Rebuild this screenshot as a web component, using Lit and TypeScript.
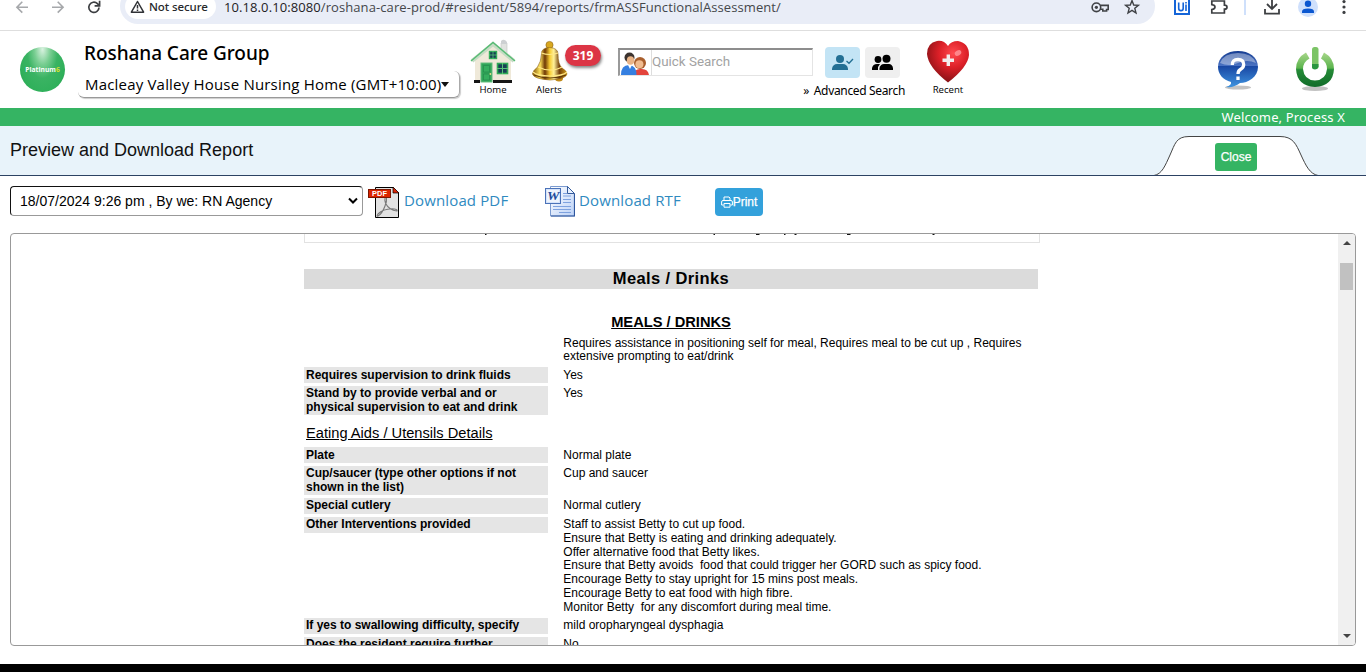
import { LitElement, html, css, svg, nothing } from "lit";
import { customElement } from "lit/decorators.js";

interface Row {
  label?: string[];
  value: string[];
  size: string;
}

const intro = [
  "Requires assistance in positioning self for meal, Requires meal to be cut up , Requires",
  "extensive prompting to eat/drink",
];

const firstRows: Row[] = [
  { label: ["Requires supervision to drink fluids"], value: ["Yes"], size: "one" },
  { label: ["Stand by to provide verbal and or", "physical supervision to eat and drink"], value: ["Yes"], size: "two" },
];

const utensilRows: Row[] = [
  { label: ["Plate"], value: ["Normal plate"], size: "one" },
  { label: ["Cup/saucer (type other options if not", "shown in the list)"], value: ["Cup and saucer"], size: "two" },
  { label: ["Special cutlery"], value: ["Normal cutlery"], size: "one" },
  {
    label: ["Other Interventions provided"],
    value: [
      "Staff to assist Betty to cut up food.",
      "Ensure that Betty is eating and drinking adequately.",
      "Offer alternative food that Betty likes.",
      "Ensure that Betty avoids  food that could trigger her GORD such as spicy food.",
      "Encourage Betty to stay upright for 15 mins post meals.",
      "Encourage Betty to eat food with high fibre.",
      "Monitor Betty  for any discomfort during meal time.",
    ],
    size: "seven",
  },
  { label: ["If yes to swallowing difficulty, specify"], value: ["mild oropharyngeal dysphagia"], size: "one" },
  { label: ["Does the resident require further"], value: ["No"], size: "two" },
];

@customElement("browser-bar")
export class BrowserBar extends LitElement {
  static styles = css`
    :host { display: flex; height: 30px; background: #fff; border-bottom: 1px solid #dedede; overflow: hidden; font-family: "Open Sans", sans-serif; }
    svg { display: block; flex: none; }
    .nav { width: 120px; flex: none; }
    .omni { width: 1035px; height: 36px; margin-top: -12px; background: #e9edf7; border-radius: 18px; display: flex; flex: none; align-items: center; }
    .chip { margin-left: 5px; width: 91px; height: 25px; border-radius: 13px; background: #fff; display: flex; align-items: center; flex: none; }
    .chip svg { margin: 2px 0 0 5px; }
    .chip span { font-size: 11.5px; line-height: 12px; padding-top: 2px; font-weight: 500; color: #26282b; margin: 0 0 0 4px; letter-spacing: -0.08px; white-space: nowrap; font-family: "Noto Sans", sans-serif; }
    .url { margin-left: 8px; width: 866px; font-size: 13px; line-height: 14px; padding-top: 2px; color: #44474b; letter-spacing: 0.09px; white-space: nowrap; }
    .url b { font-weight: 400; color: #1f2124; }
    .tools { width: 211px; }
  `;

  render() {
    return html`
      <svg class="nav" width="120" height="30" viewBox="0 0 120 30" fill="none" stroke-width="1.6">
        <path d="M28 7.2H17M22.3 1.8L16.9 7.2L22.3 12.6" stroke="#a6a8ab" />
        <path d="M52 7.2H63M57.7 1.8L63.1 7.2L57.7 12.6" stroke="#a6a8ab" />
        <path d="M99 7.4A5.1 5.1 0 1 1 97.4 3.6L99 5.2" stroke="#3d3f42" stroke-width="1.7" />
        <path d="M99.6 0.8V5.8H94.6" stroke="#3d3f42" stroke-width="1.7" />
      </svg>
      <div class="omni">
        <div class="chip">
          <svg width="15" height="14" viewBox="0 0 15 14" fill="none" stroke="#303236" stroke-width="1.5">
            <path d="M7.5 1.5L13.6 12.2H1.4Z" stroke-linejoin="round" /><path d="M7.5 5V8.4M7.5 9.4V11" />
          </svg>
          <span>Not secure</span>
        </div>
        <span class="url"><b>10.18.0.10:8080</b>/roshana-care-prod/#resident/5894/reports/frmASSFunctionalAssessment/</span>
        <svg width="56" height="36" viewBox="0 0 56 36" fill="none" stroke="#3f4145" stroke-width="1.6">
          <circle cx="6.4" cy="19.3" r="4.3" /><circle cx="6.4" cy="19.3" r="1.6" fill="#3f4145" stroke="none" />
          <path d="M10.3 17.4H18.2V21.5H16.6V23H12.8V21.2H10.2" />
          <path d="M42 12.6L43.7 17L48.4 17.3L44.8 20.3L46 25L42 22.4L38 25L39.2 20.3L35.6 17.3L40.3 17Z" stroke-width="1.4" />
        </svg>
      </div>
      <svg class="tools" width="211" height="30" viewBox="0 0 211 30">
        <rect x="20" y="-4" width="14" height="18" fill="#fff" stroke="#1565d8" stroke-width="2" />
        <path d="M23.7 2.6V8.2Q23.7 10.6 26 10.6Q28.2 10.6 28.2 8.2V2.6M31 4.5V11M31 2V3.4" fill="none" stroke="#1565d8" stroke-width="1.6" />
        <path d="M56.8 1H69.400V5.200Q72 5.200 72 7.200Q72 9.200 69.400 9.200V13H56.8V9.5Q60 9 60 7Q60 5 56.8 4.6Z" fill="none" stroke="#3d3f42" stroke-width="1.7" />
        <path d="M90 0V15" stroke="#cfe0fb" stroke-width="2" />
        <path d="M117 -3V8M112 4L117 9L122 4M110 9V13.7H124V9" fill="none" stroke="#3d3f42" stroke-width="1.8" />
        <circle cx="153" cy="7" r="10" fill="#cfe0fc" />
        <circle cx="153" cy="3.8" r="3.2" fill="#0b57d0" /><path d="M147 13V11.5Q147 8.4 153 8.4Q159 8.4 159 11.5V13Z" fill="#0b57d0" />
        <circle cx="189" cy="1.6" r="1.6" fill="#3d3f42" /><circle cx="189" cy="7" r="1.6" fill="#3d3f42" /><circle cx="189" cy="12.4" r="1.6" fill="#3d3f42" />
      </svg>
    `;
  }
}

@customElement("site-header")
export class SiteHeader extends LitElement {
  static styles = css`
    :host { display: flex; height: 77px; background: #fff; font-family: "Open Sans", sans-serif; color: #000; }
    svg { display: block; flex: none; overflow: visible; }
    .logo { margin: 16px 0 0 20px; width: 45px; height: 45px; display: grid; place-items: center; border-radius: 50%; background: radial-gradient(ellipse at 50% 5%, #d9f2e0 0, #79ce92 25%, #3ab363 48%, #2fb05a 75%, #1e9448 100%); flex: none; }
    .logo span { font: 700 6.7px "Open Sans", sans-serif; color: #fff; }
    .logo i { font-style: normal; color: #d5df2c; }
    .facility { margin-left: 13px; width: 383px; flex: none; }
    .name { margin: 9px 0 0 6px; font: 500 19px/26px "Noto Sans", sans-serif; white-space: nowrap; letter-spacing: -0.06px; }
    .picker { margin-top: 5px; width: 374px; height: 26px; padding-left: 7px; display: flex; align-items: center; border-radius: 6px; border-right: 1px solid #aaa; border-bottom: 1px solid #999; box-shadow: 1px 1px 1px #ccc; font-size: 15px; letter-spacing: 0.19px; white-space: nowrap; }
    .caret { border: 4px solid transparent; border-top: 5px solid #111; border-bottom: 0; }
    .item { display: flex; flex-direction: column; align-items: center; flex: none; }
    .item span { font-size: 9.6px; line-height: 14px; margin-top: -2px; white-space: nowrap; }
    .home { width: 50px; margin: 8px 0 0 7px; }
    .alerts { width: 50px; margin: 8px 0 0 6px; position: relative; }
    .alerts .badge { position: absolute; left: 41px; top: 6px; width: 36px; height: 21px; border-radius: 11px; background: #dc3545; color: #fff; font: 700 12px/21px "Noto Sans", sans-serif; text-align: center; box-shadow: 1px 2px 3px #888; }
    .search { margin: 17px 0 0 44px; width: 287px; flex: none; }
    .line { display: flex; }
    .box { width: 192px; height: 25px; border: 1px solid #e4e4e4; border-top: 2px solid #8d8d8d; border-left: 2px solid #999; display: flex; }
    .box span { border-left: 1px solid #ddd; font: 13.4px/23px Roboto, sans-serif; color: #a2a2a2; }
    .sq { width: 35px; height: 31px; border-radius: 4px; display: grid; place-items: center; margin: -1px 0 0 12px; background: #c3e4f5; }
    .sq.grey { background: #efefef; margin-left: 5px; }
    .adv { font-size: 12px; line-height: 17px; margin-top: 4px; text-align: right; font-family: "Noto Sans", sans-serif; letter-spacing: -0.34px; white-space: nowrap; }
    .adv b { font-weight: 400; margin-right: 2px; }
    .recent { width: 50px; margin: 9px 0 0 18px; }
    .help { margin: 18px 0 0 244px; }
    .power { margin: 15px 0 0 36px; }
  `;

  render() {
    return html`
      <div class="logo"><span>Platinum<i>6</i></span></div>
      <div class="facility">
        <div class="name">Roshana Care Group</div>
        <div class="picker">Macleay Valley House Nursing Home (GMT+10:00)<span class="caret"></span></div>
      </div>
      <div class="item home">
        <svg width="46" height="46" viewBox="0 0 46 46">
          <path d="M31 4H37V17L31 11Z" fill="#e1e3e0" stroke="#c0c5c0" stroke-width="0.6" /><path d="M31 2Q34 -1 37 3L37 5H31Z" fill="#cdd0d2" />
          <path d="M5 19L23 5L41 20V43H5Z" fill="#efe9d9" />
          <path d="M2 22L23 5L44 22" fill="none" stroke="#c5dcc4" stroke-width="4" />
          <path d="M1 22L23 3.5L45 22" fill="none" stroke="#57bb74" stroke-width="1.4" />
          <path d="M4 41H10V44H4ZM23 41H42V44H23Z" fill="#161616" />
          <rect x="11" y="24" width="11" height="19" fill="#2fa558" stroke="#67bd7f" stroke-width="1" />
          <path d="M13.5 26.5H19.5V33H13.5ZM13.5 35H19.5V41H13.5Z" fill="#35ad5e" stroke="#24854a" stroke-width="0.6" /><circle cx="20.4" cy="35" r="0.9" fill="#e8dc8c" />
          <rect x="27.5" y="24.5" width="10" height="10" fill="#173f54" stroke="#2faa56" stroke-width="1.6" /><path d="M32.5 24V35M27 29.5H38" stroke="#57c277" />
          <rect x="19.5" y="12.5" width="7" height="7" fill="#173f54" stroke="#2faa56" stroke-width="1.4" /><path d="M23 12V20M19 16H27" stroke="#57c277" stroke-width="0.8" />
        </svg>
        <span>Home</span>
      </div>
      <div class="item alerts">
        <svg width="40" height="46" viewBox="0 0 40 46">
          <defs><linearGradient id="gold"><stop offset="0" stop-color="#805208" /><stop offset=".22" stop-color="#ffe45c" /><stop offset=".36" stop-color="#6e3806" /><stop offset=".5" stop-color="#f7cc32" /><stop offset=".62" stop-color="#fff199" /><stop offset=".78" stop-color="#744009" /><stop offset="1" stop-color="#d69d16" /></linearGradient></defs>
          <ellipse cx="30" cy="39.5" rx="4" ry="3" fill="#c18a17" />
          <circle cx="20.5" cy="6" r="3.6" fill="#d9a820" stroke="#8b6112" stroke-width="0.6" />
          <path d="M12.5 15Q12 9 20.5 8.5Q29 9 29 15Q29 25 33 29Q38 32 38 35Q37 40 21 41Q5 40 3.5 35Q3.5 32 8.5 28Q12 23 12.5 15Z" fill="url(#gold)" stroke="#8b6112" stroke-width="0.6" />
          <path d="M4 33Q8 37 21 37Q34 37 38 33M9 28Q15 31 21 31Q28 31 33 28M12.5 14Q20 17 29 14" fill="none" stroke="#ffe784" stroke-width="1.2" />
          <path d="M5 36Q12 39 21 39Q31 39 37 36" fill="none" stroke="#5d3709" stroke-width="1" />
        </svg>
        <span>Alerts</span><div class="badge">319</div>
      </div>
      <div class="search">
        <div class="line">
          <div class="box">
            <svg width="31" height="25" viewBox="0 0 31 25">
              <circle cx="20" cy="13" r="6" fill="#a95f2d" /><circle cx="19.400" cy="14.200" r="4" fill="#f0bc90" />
              <path d="M14 25Q14 19 20 19Q28 18 29 25Z" fill="#e3443c" />
              <circle cx="9.500" cy="7.500" r="5" fill="#3b332f" /><ellipse cx="10.500" cy="10.500" rx="3.700" ry="4.300" fill="#eab588" />
              <path d="M1 25Q1 15 9 15Q17 16 16.5 25Z" fill="#357fe0" /><path d="M8 15L10 19L12 15Z" fill="#fff" />
            </svg><span>Quick Search</span>
          </div>
          <div class="sq"><svg width="23" height="17" viewBox="0 0 23 17"><circle cx="9" cy="5" r="4" fill="#226f94" /><path d="M1 16V14.5Q2 10 6 10H12Q16 10 17 14.5V16Z" fill="#226f94" /><path d="M15.5 7L18 9.3L22 5" fill="none" stroke="#226f94" stroke-width="1.3" /></svg></div>
          <div class="sq grey"><svg width="23" height="17" viewBox="0 0 23 17"><circle cx="7" cy="5.5" r="3.4" /><path d="M1 16V14Q2 10 6 10H9L7 13V16Z" /><circle cx="15.5" cy="4.7" r="4" /><path d="M8.5 16V14Q9.5 10 13 10H18Q21 10 22 14V16Z" /></svg></div>
        </div>
        <div class="adv"><b>»</b> Advanced Search</div>
      </div>
      <div class="item recent">
        <svg width="44" height="45" viewBox="0 0 44 45">
          <defs><radialGradient id="heart" cx=".62" cy=".3" r=".75"><stop offset="0" stop-color="#ff4a50" /><stop offset=".45" stop-color="#dd2028" /><stop offset="1" stop-color="#7c1014" /></radialGradient></defs>
          <path d="M22 6Q25 1 32 1Q43 3 43 15Q42 27 22 42.5Q2 27 1 14Q1 3 11 1Q18 0 22 6Z" fill="url(#heart)" />
          <ellipse cx="32" cy="13" rx="3.5" ry="2.5" fill="#ff999c" opacity=".8" transform="rotate(-30 32 13)" />
          <path d="M22.3 14.5V26M16.5 20.2H28" stroke="#f3eded" stroke-width="3.4" />
        </svg>
        <span>Recent</span>
      </div>
      <svg class="help" width="42" height="42" viewBox="0 0 42 42">
        <defs><linearGradient id="blue" x2="0" y2="1"><stop offset="0" stop-color="#153c91" /><stop offset=".4" stop-color="#4a72c2" /><stop offset=".42" stop-color="#1947a3" /><stop offset="1" stop-color="#3e93df" /></linearGradient></defs>
        <ellipse cx="21" cy="38.5" rx="13" ry="2" fill="#aaa" opacity=".7" />
        <path d="M21 2C32 2 41 8 41 18C41 28 31 34 23 34Q17 39 9 38Q15 36 14 33C6 31 1 25 1 18C1 8 10 2 21 2Z" fill="url(#blue)" />
        <path d="M3 14Q7 4 21 4Q35 4 39 14Q30 10 21 14Q12 18 3 14Z" fill="#fff" opacity=".38" />
        <path d="M15.3 16Q15 10.5 21 10.5Q26.7 10.5 26.7 15.5Q26.7 18.5 24 20Q21 21.5 21 25M21 27.4V31" fill="none" stroke="#fff" stroke-width="3.3" />
      </svg>
      <svg class="power" width="40" height="46" viewBox="0 0 40 46">
        <defs><linearGradient id="pow" x2="0" y2="1"><stop offset="0" stop-color="#a8d68a" /><stop offset=".45" stop-color="#5bb44d" /><stop offset=".5" stop-color="#258b37" /><stop offset="1" stop-color="#116c2a" /></linearGradient></defs>
        <ellipse cx="20" cy="42.5" rx="13" ry="2.5" fill="#999" opacity=".6" />
        <path d="M11 6.5L14.5 12.5Q8 16 8 23Q9 34 20 34.5Q31 34 32 23Q32 16 26 12.5L29 6.5Q39 12 39 23Q38 40 20 41Q2 40 1 23Q1 12 11 6.5Z" fill="url(#pow)" />
        <rect x="17" y="1" width="6.5" height="22" rx="2.5" fill="#7cc466" /><path d="M17 18H23.5V21Q22 23.5 20 23.5Q17 23 17 21Z" fill="#2a9640" />
      </svg>
    `;
  }
}

@customElement("report-page")
export class ReportPage extends LitElement {
  static styles = css`
    :host { flex: 1; display: block; height: 411px; overflow: hidden; font: 12px/13.75px "Liberation Sans", Arial, sans-serif; color: #000; }
    .sheet { width: 736px; margin-left: 293px; }
    .prior { height: 8px; border: 1px solid #e2e2e2; border-top: 0; }
    .prior svg { display: block; }
    .band { margin-top: 26px; width: 734px; height: 20px; background: #dbdbdb; font: 700 16.5px/18px "Liberation Sans", sans-serif; text-align: center; letter-spacing: 0.38px; }
    .sub { width: 734px; margin-top: 23px; font: 700 14.67px/20px "Liberation Sans", sans-serif; text-align: center; text-decoration: underline; }
    .intro { margin: 4.6px 0 3.8px 259.3px; height: 27px; }
    .ln { white-space: pre; }
    .row { display: grid; grid-template-columns: 244px 1fr; column-gap: 15.3px; margin-bottom: 3px; align-items: start; }
    .one { height: 15.6px; } .two { height: 29px; } .seven { height: 98.4px; }
    .label { background: #e5e5e5; font-weight: 700; padding: 1.45px 2px 0; height: 16px; box-sizing: border-box; }
    .two .label { height: 29px; }
    .value { padding-top: 1.45px; }
    .group { font-size: 14.67px; line-height: 20px; text-decoration: underline; margin: 8px 0 4.4px 2px; }
  `;

  row(r: Row) {
    return html`<div class="row ${r.size}">
      <div class="label">${r.label?.map((t) => html`<div class="ln">${t}</div>`) ?? nothing}</div>
      <div class="value">${r.value.map((t) => html`<div class="ln">${t}</div>`)}</div>
    </div>`;
  }

  render() {
    return html`<div class="sheet">
      <div class="prior"><svg width="734" height="8" viewBox="0 0 734 8"><path d="M180 0.500H181.500M408.500 0.500H410M451 0.500H454.500M479 0.500H480.500M489.500 0.500H491.500M542 0.500H545.500M627.500 0.500H629.500" stroke="#111" /></svg></div>
      <div class="band">Meals / Drinks</div>
      <div class="sub">MEALS / DRINKS</div>
      <div class="intro">${intro.map((t) => html`<div class="ln">${t}</div>`)}</div>
      ${firstRows.map((r) => this.row(r))}
      <div class="group">Eating Aids / Utensils Details</div>
      ${utensilRows.map((r) => this.row(r))}
    </div>`;
  }
}

@customElement("app-root")
export class AppRoot extends LitElement {
  static styles = css`
    :host { display: flex; flex-direction: column; height: 672px; background: #fff; overflow: hidden; font-family: "Liberation Sans", Arial, sans-serif; }
    svg { display: block; flex: none; }
    .browser, .header { flex: none; }
    .welcome { height: 18px; background: #35b463; color: #fff; text-align: right; padding-right: 21px; font: 13px/18px "Noto Sans", sans-serif; letter-spacing: 0.15px; flex: none; }
    .titlebar { height: 49px; background: #e8f3fa; border-bottom: 1px solid #2c4263; display: flex; justify-content: space-between; flex: none; }
    .titlebar h1 { margin: 0 0 0 10px; font: 400 18px/48px "Liberation Sans", sans-serif; color: #111; }
    .tab { width: 166px; height: 40px; margin: 10px 47px -1px 0; display: grid; }
    .tab svg, .tab button { grid-area: 1 / 1; }
    .tab button { width: 42px; height: 28px; margin: 7px 0 0 62px; padding: 0; border: 0; border-radius: 3px; background: #35b463; color: #fff; font: 500 12px "Liberation Sans", sans-serif; -webkit-text-stroke: 0.25px #fff; }
    .toolbar { height: 57px; display: flex; align-items: flex-start; flex: none; }
    .select { width: 342px; height: 28px; margin: 10px 0 0 10px; padding-left: 9px; border: 1px solid #111; border-right-color: #999; border-bottom-color: #999; border-radius: 4px; display: flex; align-items: center; justify-content: space-between; font-size: 14px; }
    .select svg { margin-right: 3px; }
    .pdf { margin: 10px 0 0 5px; }
    .word { margin: 10px 0 0 36px; }
    .link { margin: 12px 0 0 5px; font: 15px/24px "Open Sans", sans-serif; letter-spacing: 0.14px; color: #2f8abf; white-space: nowrap; width: 105px; }
    .link.rtf { margin-left: 4px; width: 101px; }
    .print { margin: 12px 0 0 35px; width: 48px; height: 28px; border: 0; padding: 0; border-radius: 4px; background: #33a1db; color: #fff; font: 12px "Liberation Sans", sans-serif; display: flex; align-items: center; justify-content: center; -webkit-text-stroke: 0.25px #fff; }
    .frame { height: 411px; margin: 0 10px 0 10px; border: 1px solid #999; border-radius: 4px; display: flex; overflow: hidden; flex: none; }
    .scroll { width: 17px; background: #f0f0f0; display: flex; flex-direction: column; align-items: center; flex: none; }
    .up { border: 4px solid transparent; border-bottom-color: #444; border-top: 0; margin-top: 7px; }
    .thumb { width: 13px; height: 27px; background: #c1c1c1; margin-top: 18px; }
    .down { border: 4px solid transparent; border-top-color: #444; border-bottom: 0; margin: auto 0 7px; }
    .taskbar { height: 8px; background: #000; margin-top: auto; flex: none; }
  `;

  pdfIcon = svg`<svg class="pdf" width="31" height="32" viewBox="0 0 31 32">
    <path d="M7.5 1.5H25L30.5 7V31.5H7.5Z" fill="#e2e2e2" stroke="#000" />
    <path d="M25 1L31 7H25Z" fill="#d92405" stroke="#000" stroke-width="0.7" />
    <path d="M17.5 11Q16 14 18 18Q21 24 29 25Q30 23 24 22.8Q15 23 10 28Q8 31 10 30Q14 28 17 20Q19 15 18.5 12" fill="none" stroke="#787878" stroke-width="1.1" />
    <rect x="0.5" y="3.5" width="22" height="8" fill="#dc2300" stroke="#7c1600" />
    <text x="4" y="10.2" font-family="Liberation Sans" font-weight="700" font-size="7.4" fill="#fff" textLength="15">PDF</text>
  </svg>`;

  wordIcon = svg`<svg class="word" width="30" height="31" viewBox="0 0 30 31">
    <defs><linearGradient id="paper" x2="1" y2="1"><stop offset="0" stop-color="#fff" /><stop offset="1" stop-color="#bcd2f7" /></linearGradient></defs>
    <path d="M5.5 .5H22.5L29.5 7.5V30H5.5Z" fill="url(#paper)" stroke="#7b9bd0" />
    <path d="M22.5 .5V7.5H29.5Z" fill="#e8f1ff" stroke="#345b9b" />
    <path d="M29.5 8V30H6" fill="none" stroke="#2e569e" stroke-width="1.2" />
    <path d="M18 7.5H22M18 10H26M18 13.5H26M18 16.5H26M8 20.5H26M8 23.5H26M14 26.5H26" stroke="#7ea2df" />
    <rect x=".5" y="2.5" width="15" height="15" fill="#d4e3fb" stroke="#4b72b8" /><rect x="2" y="4" width="12" height="12" fill="#fff" opacity=".6" />
    <text x="2" y="14.2" font-family="Liberation Serif" font-style="italic" font-weight="700" font-size="13" textLength="12.5" lengthAdjust="spacingAndGlyphs" fill="#214b9b">W</text>
  </svg>`;

  render() {
    return html`
      <browser-bar class="browser"></browser-bar>
      <site-header class="header"></site-header>
      <div class="welcome">Welcome, Process X</div>
      <div class="titlebar">
        <h1>Preview and Download Report</h1>
        <div class="tab">
          <svg width="166" height="40" viewBox="0 0 166 40"><path d="M1 39.5C9 38 12 30 17 19C22 8 23 .5 36 .5H127C140 .5 143 8 148 19C153 30 157 38 165 39.5" fill="#fff" stroke="#444" /><path d="M0 39.5H166" stroke="#2c4263" /></svg>
          <button>Close</button>
        </div>
      </div>
      <div class="toolbar">
        <div class="select">18/07/2024 9:26 pm , By we: RN Agency
          <svg width="12" height="8" viewBox="0 0 12 8"><path d="M2 1.5L6 5.5L10 1.5" fill="none" stroke="#000" stroke-width="2" /></svg>
        </div>
        ${this.pdfIcon}<span class="link">Download PDF</span>
        ${this.wordIcon}<span class="link rtf">Download RTF</span>
        <button class="print"><svg width="12" height="12" viewBox="0 0 12 12" fill="none" stroke="#fff"><path d="M3 4.5V1H8L9 2V4.5M2.5 9H.6V6Q.6 4.5 2 4.5H10Q11.4 4.5 11.4 6V9H9.5M3 7.5H9V11.2H3Z" /></svg>Print</button>
      </div>
      <div class="frame">
        <report-page></report-page>
        <div class="scroll"><div class="up"></div><div class="thumb"></div><div class="down"></div></div>
      </div>
      <div class="taskbar"></div>
    `;
  }
}
